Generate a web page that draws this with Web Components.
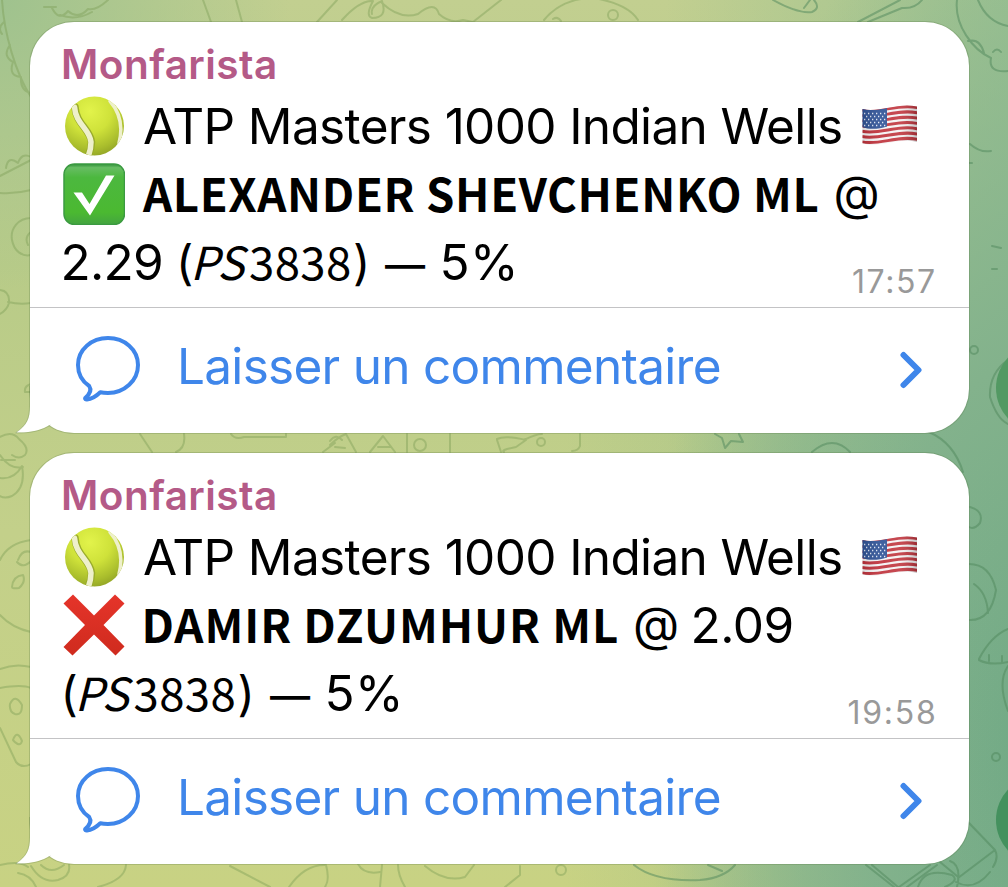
<!DOCTYPE html>
<html lang="fr">
<head>
<meta charset="utf-8">
<title>Monfarista</title>
<style>
  body {
    margin: 0;
    width: 1008px;
    height: 887px;
    overflow: hidden;
    font-family: Inter, "Liberation Sans", sans-serif;
  }
</style>
</head>
<body>
<chat-wall>
  <chat-bubble author="Monfarista">
    <chat-line>
      <emoji-icon name="ball"></emoji-icon>
      <text-run gap="19" width="697">ATP Masters 1000 Indian Wells</text-run>
      <emoji-icon name="flag"></emoji-icon>
    </chat-line>
    <chat-line>
      <emoji-icon name="check"></emoji-icon>
      <text-run kind="bold" gap="17" width="675.5">ALEXANDER SHEVCHENKO ML</text-run>
      <text-run kind="at" gap="18" width="41.5">@</text-run>
    </chat-line>
    <chat-line>
      <text-run gap="1.5" width="97.5">2.29</text-run>
      <text-run kind="paren" gap="20" width="10.5">(</text-run>
      <text-run kind="italic" gap="2.5" width="55">PS</text-run>
      <text-run kind="alt" gap="1" width="100">3838</text-run>
      <text-run kind="paren" gap="5" width="10.5">)</text-run>
      <text-run kind="dash" gap="19.5" width="40.5">—</text-run>
      <text-run gap="17" width="71.5">5%</text-run>
      <text-run kind="time" push width="81">17:57</text-run>
    </chat-line>
  </chat-bubble>

  <chat-bubble author="Monfarista">
    <chat-line>
      <emoji-icon name="ball"></emoji-icon>
      <text-run gap="19" width="697">ATP Masters 1000 Indian Wells</text-run>
      <emoji-icon name="flag"></emoji-icon>
    </chat-line>
    <chat-line>
      <emoji-icon name="cross"></emoji-icon>
      <text-run kind="bold" gap="20.5" width="471.5">DAMIR DZUMHUR ML</text-run>
      <text-run kind="at" gap="18" width="41.5">@</text-run>
      <text-run gap="17" width="98">2.09</text-run>
    </chat-line>
    <chat-line>
      <text-run kind="paren" gap="3.5" width="10.5">(</text-run>
      <text-run kind="italic" gap="2.5" width="55">PS</text-run>
      <text-run kind="alt" gap="1" width="100">3838</text-run>
      <text-run kind="paren" gap="5" width="10.5">)</text-run>
      <text-run kind="dash" gap="20" width="40.5">—</text-run>
      <text-run gap="17" width="71.5">5%</text-run>
      <text-run kind="time" push width="85.5">19:58</text-run>
    </chat-line>
  </chat-bubble>
</chat-wall>

<script>
const icons = {
  ball: `
    <svg width="62" height="60" viewBox="0 0 62 60">
      <defs>
        <radialGradient id="b" cx=".42" cy=".25" r=".8">
          <stop offset="0" stop-color="#e2f34b"/>
          <stop offset=".45" stop-color="#cfe23a"/>
          <stop offset=".8" stop-color="#a9bd2c"/>
          <stop offset="1" stop-color="#8fa125"/>
        </radialGradient>
        <clipPath id="c"><circle cx="31.500" cy="30" r="29.500"/></clipPath>
      </defs>
      <circle cx="31.500" cy="30" r="29.500" fill="url(#b)"/>
      <g clip-path="url(#c)" fill="none" stroke-linecap="round">
        <path d="M12 11C13 28 27 33 28.500 46C28.500 52 27 56 25 60" stroke="#9aac2c" stroke-width="7.500"/>
        <path d="M11.500 11C12.500 28 27 33 28 46C28 52 27 56 25 61" stroke="#eef0cb" stroke-width="5.500"/>
        <path d="M47 5C58 18 60 32 56 47" stroke="#eef0cb" stroke-width="3.500"/>
      </g>
    </svg>`,
  check: `
    <svg width="62" height="62" viewBox="0 0 62 62">
      <defs>
        <linearGradient id="g" x2="0" y2="1">
          <stop offset="0" stop-color="#2f8f38"/>
          <stop offset=".06" stop-color="#67bd63"/>
          <stop offset=".22" stop-color="#4cb83f"/>
          <stop offset=".8" stop-color="#4bb931"/>
          <stop offset="1" stop-color="#43a440"/>
        </linearGradient>
      </defs>
      <rect x="1" y="1" width="60.500" height="60.500" rx="10.500" fill="url(#g)" stroke="#3b9a41" stroke-width="1.500"/>
      <path d="M10.500 29.500H19L26.500 41L43 12.500H51.500L27 52.500Z" fill="#fff"/>
    </svg>`,
  cross: `
    <svg width="62" height="62" viewBox="0 0 62 62">
      <defs>
        <linearGradient id="r" x2="0" y2="1">
          <stop offset="0" stop-color="#e5342a"/>
          <stop offset="1" stop-color="#cf2b1e"/>
        </linearGradient>
      </defs>
      <path d="M10 .5L31 21.500L52 .5L61.500 9.500L40.500 31L61.500 52.500L52.500 61.500L31 40.500L9.500 61.500L.5 53L22 31L.5 9.500Z" fill="url(#r)"/>
    </svg>`,
  flag: `
    <svg width="56" height="41" viewBox="0 0 56 41">
      <defs>
        <clipPath id="f"><path d="M.5 4C17 8 36-3 55 1.500V37C37 32 19 43 .5 38.500Z"/></clipPath>
        <linearGradient id="s">
          <stop offset="0" stop-color="#000" stop-opacity=".12"/>
          <stop offset=".3" stop-color="#fff" stop-opacity=".08"/>
          <stop offset=".7" stop-color="#fff" stop-opacity=".12"/>
          <stop offset="1" stop-color="#000" stop-opacity=".22"/>
        </linearGradient>
      </defs>
      <g clip-path="url(#f)">
        <path d="M0 0H56V41H0Z" fill="#f4f2f3"/>
        <g id="stripes" fill="none" stroke="#bf323b" stroke-width="2.900"></g>
        <path d="M0 3C8 6 17 5 25 3V21.500C17 24 8 25 0 22Z" fill="#2f5296"/>
        <path d="M2 8.500H24M4 11.500H24M2 14.500H24M4 17.500H24M2 20.500H24" stroke="#dfe6f3" stroke-width="1.300" stroke-dasharray="1.300 2.700"/>
        <path d="M0 0H56V41H0Z" fill="url(#s)"/>
      </g>
    </svg>`
};

class EmojiIcon extends HTMLElement {
  connectedCallback() {
    const name = this.getAttribute('name');
    this.attachShadow({ mode: 'open' });
    this.shadowRoot.innerHTML = `
      <style>
        :host {
          display: block;
          align-self: center;
          margin-left: ${name === 'flag' ? '21px' : '1px'};
          height: ${name === 'flag' ? '42px' : 'auto'};
        }
        svg { display: block; }
      </style>
      ${icons[name]}
    `;

    if (name === 'flag') {
      let stripes = '';
      for (let i = 0; i < 7; i++) {
        const y = i * 5.3;
        stripes += `<path d="M0 ${y + 5}C17 ${y + 9} 36 ${y - 2} 56 ${y + 2.7}"/>`;
      }
      this.shadowRoot.querySelector('#stripes').innerHTML = stripes;
    }
  }
}

const pen = document.createElement('canvas').getContext('2d');

// A piece of text whose drawn width is fixed; letters are spaced to fill it
class TextRun extends HTMLElement {
  connectedCallback() {
    this.attachShadow({ mode: 'open' });
    this.shadowRoot.innerHTML = `
      <style>
        :host {
          display: block;
          flex: none;
          box-sizing: content-box;
          width: ${this.getAttribute('width')}px;
          margin-left: ${this.hasAttribute('push') ? 'auto' : (this.getAttribute('gap') || 0) + 'px'};
          font: 400 49.5px/1px Inter, "Liberation Sans", sans-serif;
          color: #000;
          white-space: nowrap;
        }
        :host([kind="bold"]) { font: 700 45.5px/1px "Noto Sans CJK SC", "Noto Sans", sans-serif; }
        :host([kind="alt"]) { font: 400 45.5px/1px "Noto Sans CJK SC", "Noto Sans", sans-serif; }
        :host([kind="italic"]) { font: italic 400 45.5px/1px "Noto Sans CJK SC", "Noto Sans", sans-serif; }
        :host([kind="paren"]) { font-size: 47.5px; }
        :host([kind="at"]) { transform: translateY(-2px); }
        :host([kind="dash"]) { font-weight: 500; transform: translateY(-1px); }
        :host([kind="name"]) { font-size: 40.5px; font-weight: 600; line-height: 50px; color: #b45a87; }
        :host([kind="time"]) { font-size: 32px; line-height: 29px; align-self: flex-end; color: #999; }
        :host([kind="link"]) { color: #3f86ea; line-height: 60px; }
        span { display: block; }
      </style>
      <span><slot></slot></span>
    `;
    this.fit();
  }

  fit() {
    const text = this.textContent;
    const span = this.shadowRoot.querySelector('span');
    const css = getComputedStyle(this);
    const width = Number(this.getAttribute('width'));
    let size = parseFloat(css.fontSize);
    const measure = () => {
      pen.font = `${css.fontStyle} ${css.fontWeight} ${size}px ${css.fontFamily}`;
      return pen.measureText(text);
    };

    let m = measure();
    let ink = m.actualBoundingBoxLeft + m.actualBoundingBoxRight;
    if (text.length > 1) {
      span.style.letterSpacing = `${(width - ink) / (text.length - 1)}px`;
    } else if (this.getAttribute('kind') === 'paren') {
      // keep the size, only trim the side bearings
      span.style.letterSpacing = `${width - m.width}px`;
    } else {
      size *= width / ink;
      span.style.fontSize = `${size}px`;
      m = measure();
    }
    span.style.marginLeft = `${m.actualBoundingBoxLeft}px`;
  }
}

class ChatLine extends HTMLElement {
  constructor() {
    super();
    this.attachShadow({ mode: 'open' });
    this.shadowRoot.innerHTML = `
      <style>
        :host {
          display: flex;
          align-items: baseline;
          height: 68px;
          font-size: 49.5px;
          line-height: 68px;
        }
        :host::before { content: "\\200b"; width: 0; }
      </style>
      <slot></slot>
    `;
  }
}

class CommentLink extends HTMLElement {
  constructor() {
    super();
    this.attachShadow({ mode: 'open' });
    this.shadowRoot.innerHTML = `
      <style>
        :host {
          display: flex;
          align-items: center;
          height: 126px;
          padding: 0 47.500px 0 44px;
          border-top: 1px solid #c3c3c5;
          box-sizing: border-box;
        }
        svg {
          flex: none;
          fill: none;
          stroke: #3f86ea;
          stroke-linejoin: round;
          stroke-linecap: round;
        }
        .bubble { margin-bottom: 4px; }
        text-run { margin-bottom: 8px; }
        .more { margin-left: auto; margin-bottom: 1px; }
      </style>
      <svg class="bubble" width="68" height="68" viewBox="0 0 68 68" stroke-width="4">
        <path d="M34 4C17.500 4 4 15.500 4 31C4 40 8.500 47.500 15.200 52C17.500 55.500 16 60 11.200 64C10.700 65 11.500 65.500 13 65.400C18.500 65 22.500 62 26.300 58.300C28.500 58.800 31 59 34 59C50.500 59 64 46.500 64 31C64 15.500 50.500 4 34 4Z"/>
      </svg>
      <text-run kind="link" gap="39" width="538.700">Laisser un commentaire</text-run>
      <svg class="more" width="22" height="38" viewBox="0 0 22 38" stroke-width="6">
        <path d="M3.500 4L18.500 19L3.500 34"/>
      </svg>
    `;
  }
}

class ChatBubble extends HTMLElement {
  constructor() {
    super();
    this.attachShadow({ mode: 'open' });
    this.shadowRoot.innerHTML = `
      <style>
        :host {
          display: block;
          position: relative;
          box-sizing: border-box;
          height: 411px;
          border-radius: 44px;
          background: #fff;
          box-shadow: 0 0 0 1px rgba(80, 110, 60, .25);
        }
        .tail {
          position: absolute;
          left: -15px;
          bottom: -1px;
        }
        .content {
          position: relative;
          display: flex;
          flex-direction: column;
          height: 100%;
        }
        .head { padding: 18px 0 0 33px; height: 51.500px; }
        .lines { height: 204px; padding: 0 35px 11px 32px; }
      </style>
      <svg class="tail" width="52" height="48" viewBox="0 0 52 48">
        <path d="M15 0V20C15 33 12 39 1 46.500C16 47 27 44 35.500 38.500L50 20V0Z" fill="#fff"/>
        <path d="M14.500 0V20C14.500 33 11.500 39 .8 46.800C16 47.500 27 44.500 35.500 39" fill="none" stroke="#506e3c" stroke-opacity=".25"/>
      </svg>
      <div class="content">
        <div class="head"><text-run kind="name" width="212">${this.getAttribute('author')}</text-run></div>
        <div class="lines"><slot></slot></div>
        <comment-link></comment-link>
      </div>
    `;
  }
}

class ChatWall extends HTMLElement {
  constructor() {
    super();
    this.attachShadow({ mode: 'open' });
    this.shadowRoot.innerHTML = `
      <style>
        :host {
          display: flex;
          flex-direction: column;
          gap: 20px;
          position: relative;
          box-sizing: border-box;
          width: 1008px;
          height: 887px;
          padding: 22px 39px 0 30px;
          overflow: hidden;
          background:
            radial-gradient(circle at 0 0, #9fc28e 0, rgba(159, 194, 142, 0) 290px),
            linear-gradient(to right, rgba(129, 178, 139, 0) 56%, rgba(129, 178, 139, .3) 80%, rgba(129, 178, 139, 0) 100%) 0 400px / 100% 487px no-repeat,
            radial-gradient(ellipse 390px 900px at 1040px 760px, #70a985 0, #83b28c 45%, rgba(150, 190, 142, 0) 100%),
            linear-gradient(to right, rgba(160, 196, 147, 0) 66%, #9dc292 100%),
            linear-gradient(#c2cf90, #b8cb88 30%, #c3d08a 60%, #c8d283);
        }
        .doodles {
          position: absolute;
          inset: 0;
          fill: none;
          stroke-width: 2;
          stroke-linecap: round;
          stroke-linejoin: round;
        }
        ::slotted(*) { flex: none; }
      </style>
      <svg class="doodles" width="1008" height="887" viewBox="0 0 1008 887">
        <g stroke="#7c9e55" stroke-opacity=".42">
          <path d="M2 0C4 34 16 74 31 97M4 22Q-3 28 2 34M10 45Q2 56 13 62Q8 76 21 77Q20 91 31 93M0 176L31 160M6 168Q8 155 18 163Q22 152 31 157M0 193Q16 194 31 190"/>
          <path d="M44 7H56M52 8Q59 22 68 11Q78 20 88 9Q96 11 108 0M60 15Q76 21 92 12"/>
          <path d="M31 218C18 218 10 229 12 240S22 257 31 255M31 232Q24 237 28 245M0 290Q10 291 9 303Q7 310 0 314M8 302Q20 305 31 303M31 384Q24 386 25 392H31"/>
          <path d="M203 0L211 22M236 0L242 22M317 22L337 0M342 20Q360 0 373 1Q365 16 372 18Q388 18 382 1Q370 6 372 14M382 3Q400 20 418 14Q435 0 439 14Q450 24 463 20L473 22L501 0M544 20Q562-2 594-2Q628 4 638 20M608 15a4 4 0 1 0 10 0a4 4 0 1 0-10 0M553 19q5-3 8 2"/>
          <path d="M0 437Q12 430 19 439Q30 448 25 455Q19 460 12 455M1 460H15M0 478Q14 480 22 466Q26 488 12 496Q5 499 0 496M0 455Q10 470 23 467"/>
          <path d="M31 540Q8 543 0 560M18 560Q22 549 31 552M17 562Q23 569 31 561M12 587Q13 576 23 575Q26 582 19 588Q12 589 12 587ZM0 615Q12 628 31 632M0 669Q15 663 31 667M0 688Q22 684 31 688M10 704Q15 693 22 705Q22 716 15 714Q9 712 10 704ZM13 740Q17 729 22 741Q20 748 13 740ZM0 728L16 762Q22 769 31 764"/>
          <path d="M140 434L152 452M184 434Q186 448 176 452M231 434Q235 440 244 437H286V434M335 443L323 452M330 441Q336 433 342 440M335 447L345 448M330 445Q338 437 346 434L356 452M370 452L383 436L395 452M378 447H390M407 434V452M414 445a6 6 0 1 0 12 0a6 6 0 1 0-12 0M450 434V452M497 439Q505 435 526 440L516 447Q500 450 504 452M497 440L501 452M524 440Q536 434 542 434M537 442a4 4 0 1 0 8 0a4 4 0 1 0-8 0M580 434V446Q578 451 572 451"/>
          <path d="M0 865Q20 860 28 867M31 866Q42 884 58 880Q71 876 69 865M41 865Q51 875 64 865M18 873Q31 875 36 887M98 887Q125 880 126 865M230 866L270 887M289 887Q305 864 326 865Q330 880 325 887M358 864Q364 875 380 872M382 865L380 887M398 865Q398 875 405 887M425 866Q445 883 465 877L474 865M505 887L520 875L520 866M556 870a5 5 0 1 0 10 0a5 5 0 1 0-10 0"/>
        </g>
        <g stroke="#4f875b" stroke-opacity=".5">
          <path d="M773 0Q798 14 812 12Q821 8 814 0M804 8L810 0M858 22L900 0M868 22L902 8Q915 9 922 0M957 0C954 25 973 50 991 58Q988 73 1008 71M978 0Q987 22 1008 26M968 41Q980 38 984 53M993 52Q997 47 1001 52"/>
          <path d="M970 144Q980 153 991 151M969 163H972M992 246L1001 248M992 269H997M970 350a4 4 0 1 0 8 0a4 4 0 1 0-8 0M1008 360Q989 373 990 397Q997 419 1008 424"/>
          <path d="M715 434L722 438L725 448L731 441L743 442L739 434M812 452Q833 434 850 452M929 432Q954 443 963 472M970 507Q984 511 980 523Q974 530 969 527M969 564Q990 564 996 590Q991 621 969 620M974 584Q987 593 988 613M979 659Q991 636 1008 629M979 660Q990 666 1008 662M989 655V661M1002 656V662M1008 666Q997 682 1008 711M992 757a4 4 0 1 0 8 0a4 4 0 1 0-8 0"/>
          <path d="M969 823L995 850Q999 858 993 867M958 878L995 850M950 861Q962 865 957 887M956 882Q974 892 990 872M866 865L894 887M872 865L898 887M899 887L930 865M907 887L937 865M940 862L957 876M918 887Q924 867 952 875Q960 880 945 887M634 865Q655 882 700 880Q724 878 735 865M708 865L722 871"/>
        </g>
        <circle cx="1041" cy="388" r="45" fill="#539963"/>
        <circle cx="1041" cy="820" r="45" fill="#44915e"/>
      </svg>
      <slot></slot>
    `;
  }
}

customElements.define('emoji-icon', EmojiIcon);
customElements.define('text-run', TextRun);
customElements.define('chat-line', ChatLine);
customElements.define('comment-link', CommentLink);
customElements.define('chat-bubble', ChatBubble);
customElements.define('chat-wall', ChatWall);
</script>
</body>
</html>
